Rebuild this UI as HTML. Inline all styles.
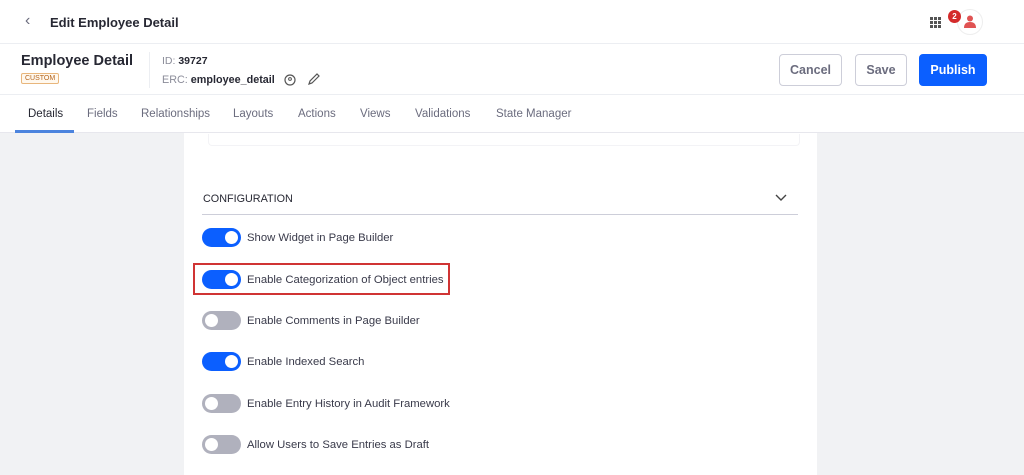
<!DOCTYPE html>
<html><head><style>
*{box-sizing:border-box;margin:0;padding:0}
body{width:1024px;height:475px;overflow:hidden;background:#f1f2f4;font-family:"Liberation Sans",sans-serif;color:#272833;position:relative}
.abs{position:absolute}
.top{left:0;top:0;width:1024px;height:44px;background:#fff;border-bottom:1px solid #eceef2}
.hdr{left:0;top:44px;width:1024px;height:51px;background:#fff;border-bottom:1px solid #eceef2}
.tabs{left:0;top:95px;width:1024px;height:38px;background:#fff;border-bottom:1px solid #e7e7ed}
.tab{position:absolute;top:13px;font-size:11.5px;color:#6b6c7e}
.btn{position:absolute;top:54px;height:32px;border:1px solid #cdced9;border-radius:4px;background:#fff;font-size:12.5px;font-weight:bold;color:#6b6c7e;text-align:center;line-height:30px}
.card{left:184px;top:133px;width:633px;height:342px;background:#fff}
.tg{position:absolute;left:202px;width:39px;height:19px;border-radius:10px;background:#0b5fff}
.tg::after{content:"";position:absolute;top:3px;left:23px;width:13px;height:13px;border-radius:50%;background:#fff}
.tg.off{background:#b0b1bd}
.tg.off::after{left:3px}
.lb{position:absolute;left:247px;font-size:11.3px;color:#393a4a}
</style></head><body>
<div class="abs top"></div>
<div class="abs" style="left:25px;top:12px;font-size:16px;color:#6b6c7e">‹</div>
<div class="abs" style="left:50px;top:15px;font-size:13px;font-weight:bold;color:#272833">Edit Employee Detail</div>
<svg class="abs" style="left:930px;top:17px" width="11" height="11"><g fill="#555">
<rect x="0" y="0" width="3" height="3"/><rect x="4" y="0" width="3" height="3"/><rect x="8" y="0" width="3" height="3"/>
<rect x="0" y="4" width="3" height="3"/><rect x="4" y="4" width="3" height="3"/><rect x="8" y="4" width="3" height="3"/>
<rect x="0" y="8" width="3" height="3"/><rect x="4" y="8" width="3" height="3"/><rect x="8" y="8" width="3" height="3"/></g></svg>
<div class="abs" style="left:957px;top:9px;width:26px;height:26px;border-radius:50%;border:1px solid #eee;background:#fff"></div>
<svg class="abs" style="left:964px;top:15px" width="12" height="13"><circle cx="6" cy="3.5" r="3" fill="#e05353"/><path d="M0 13 Q0 7 6 7 Q12 7 12 13Z" fill="#e05353"/></svg>
<div class="abs" style="left:948px;top:10px;width:13px;height:13px;border-radius:50%;background:#d42b2b;color:#fff;font-size:8px;font-weight:bold;text-align:center;line-height:13px">2</div>
<div class="abs hdr"></div>
<div class="abs" style="left:21px;top:53px;font-size:14.5px;font-weight:bold">Employee Detail</div>
<div class="abs" style="left:21px;top:73px;border:1px solid #e8b67c;border-radius:2px;font-size:7px;color:#b5651d;padding:1px 3px;background:#fff8ee">CUSTOM</div>
<div class="abs" style="left:149px;top:52px;width:1px;height:36px;background:#eceef2"></div>
<div class="abs" style="left:162px;top:55px;font-size:10.5px;color:#8b8c99">ID: <b style="color:#272833">39727</b></div>
<div class="abs" style="left:162px;top:74px;font-size:10.8px;color:#8b8c99">ERC: <b style="color:#272833">employee_detail</b></div>
<svg class="abs" style="left:284px;top:74px" width="12" height="12"><circle cx="6" cy="6" r="5" fill="none" stroke="#555" stroke-width="1.2"/><circle cx="6" cy="5" r="1.4" fill="none" stroke="#555"/></svg>
<svg class="abs" style="left:308px;top:73px" width="12" height="12"><path d="M1 11 L2 8 L9 1 L11 3 L4 10Z" fill="none" stroke="#555" stroke-width="1.2"/></svg>
<div class="btn" style="left:779px;width:63px">Cancel</div>
<div class="btn" style="left:855px;width:52px">Save</div>
<div class="btn" style="left:919px;width:68px;background:#0b5fff;border-color:#0b5fff;color:#fff">Publish</div>
<div class="abs tabs">
<div class="tab" style="left:28px;color:#272833">Details</div>
<div style="position:absolute;left:15px;top:35px;width:59px;height:3px;background:#4c84de"></div>
<div class="tab" style="left:87px">Fields</div>
<div class="tab" style="left:141px">Relationships</div>
<div class="tab" style="left:233px">Layouts</div>
<div class="tab" style="left:298px">Actions</div>
<div class="tab" style="left:360px">Views</div>
<div class="tab" style="left:415px">Validations</div>
<div class="tab" style="left:496px">State Manager</div>
</div>
<div class="abs card"></div>
<div class="abs" style="left:208px;top:134px;width:592px;height:12px;border:1px solid #f3f3f6;border-top:none;border-radius:0 0 4px 4px"></div>
<div class="abs" style="left:203px;top:193px;font-size:10.8px;color:#272833">CONFIGURATION</div>
<svg class="abs" style="left:775px;top:194px" width="12" height="8"><path d="M1 1 L6 6 L11 1" fill="none" stroke="#444" stroke-width="1.4"/></svg>
<div class="abs" style="left:202px;top:214px;width:596px;height:1px;background:#cdced9"></div>
<div class="tg" style="top:228px"></div><div class="lb" style="top:232px">Show Widget in Page Builder</div>
<div class="abs" style="left:193px;top:263px;width:257px;height:32px;border:2px solid #d03434"></div>
<div class="tg" style="top:270px"></div><div class="lb" style="top:274px">Enable Categorization of Object entries</div>
<div class="tg off" style="top:311px"></div><div class="lb" style="top:315px">Enable Comments in Page Builder</div>
<div class="tg" style="top:352px"></div><div class="lb" style="top:356px">Enable Indexed Search</div>
<div class="tg off" style="top:394px"></div><div class="lb" style="top:398px">Enable Entry History in Audit Framework</div>
<div class="tg off" style="top:435px"></div><div class="lb" style="top:439px">Allow Users to Save Entries as Draft</div>
</body></html>
